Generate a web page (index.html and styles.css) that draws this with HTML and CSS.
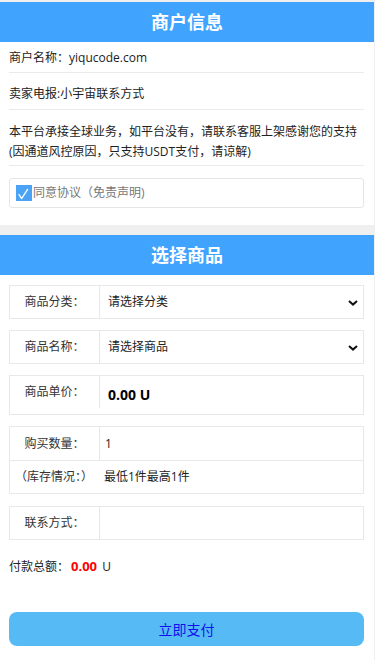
FILE: index.html
```html
<!DOCTYPE html>
<html lang="zh-CN">
<head>
<meta charset="utf-8">
<meta name="viewport" content="width=device-width, initial-scale=1">
<title>商户信息</title>
<link rel="stylesheet" href="styles.css">
</head>
<body>
<div class="page">
  <section class="panel">
    <h2 class="panel-title">商户信息</h2>
    <div class="info">
      <div class="info-row first">商户名称：yiqucode.com</div>
      <div class="info-row">卖家电报:小宇宙联系方式</div>
      <div class="info-row para">本平台承接全球业务，如平台没有，请联系客服上架感谢您的支持<br>(因通道风控原因，只支持USDT支付，请谅解)</div>
      <label class="agree">
        <span class="check"><svg width="16" height="16" viewBox="0 0 16 16"><path d="M3 9.6 L5.6 13.6 L11.6 4.4" fill="none" stroke="#fff" stroke-width="1.3" stroke-linecap="round" stroke-linejoin="round"/></svg></span>
        <span class="agree-text">同意协议（免责声明)</span>
      </label>
    </div>
  </section>

  <div class="band"></div>

  <section class="panel">
    <h2 class="panel-title">选择商品</h2>
    <div class="form">
      <div class="field">
        <div class="label">商品分类：</div>
        <div class="value select">
          <span>请选择分类</span>
          <svg class="chev" width="10" height="6" viewBox="0 0 10 6"><path d="M1 1 L5 4.6 L9 1" fill="none" stroke="#111" stroke-width="2"/></svg>
        </div>
      </div>
      <div class="field">
        <div class="label">商品名称：</div>
        <div class="value select">
          <span>请选择商品</span>
          <svg class="chev" width="10" height="6" viewBox="0 0 10 6"><path d="M1 1 L5 4.6 L9 1" fill="none" stroke="#111" stroke-width="2"/></svg>
        </div>
      </div>
      <div class="field tall">
        <div class="label">商品单价：</div>
        <div class="value price">0.00 U</div>
      </div>
      <div class="group">
        <div class="field inner">
          <div class="label">购买数量：</div>
          <div class="value plain">1</div>
        </div>
        <div class="field inner nodiv">
          <div class="label wide">（库存情况：）</div>
          <div class="value stock">最低1件最高1件</div>
        </div>
      </div>
      <div class="field contact">
        <div class="label">联系方式：</div>
        <div class="value plain"></div>
      </div>
      <div class="total">付款总额：<b class="amount">0.00</b> U</div>
      <button class="pay" type="button">立即支付</button>
    </div>
  </section>
</div>
</body>
</html>
```

FILE: styles.css
```css
html, body {
  margin: 0;
  padding: 0;
}
body {
  background: #efefef;
  font-family: "Open Sans", "Noto Sans CJK SC", sans-serif;
  font-size: 12px;
  color: #333;
}
.page {
  width: 374px;
  margin-top: 2px;
  background: #fff;
  padding-bottom: 14px;
}
.panel-title {
  margin: 0;
  height: 40px;
  line-height: 40px;
  background: #40a4ff;
  color: #fff;
  text-align: center;
  font-size: 18px;
  font-weight: bold;
}
.info {
  padding: 0 10px 17px 9px;
}
.info-row {
  line-height: 20px;
  padding: 11px 0 5px;
  border-bottom: 1px solid #ebebeb;
  color: #222;
}
.info-row.first {
  padding: 6px 0 4px;
}
.info-row.para {
  padding: 12px 0 3px;
}
.agree {
  margin-top: 12px;
  height: 28px;
  border: 1px solid #e6e6e6;
  border-radius: 3px;
  display: flex;
  align-items: center;
  padding-left: 6px;
}
.check {
  width: 16px;
  height: 16px;
  background: #4aa3f4;
  display: block;
  margin-right: 1px;
}
.check svg {
  display: block;
}
.agree-text {
  color: #777;
  line-height: 16px;
}
.band {
  height: 10px;
  background: #efefef;
}
.form {
  padding: 10px 10px 0 9px;
}
.field {
  display: flex;
  border: 1px solid #e8e8e8;
  height: 32px;
  margin-bottom: 11px;
}
.field.tall {
  height: 38px;
  align-items: flex-start;
}
.label {
  width: 89px;
  height: 32px;
  line-height: 32px;
  border-right: 1px solid #e8e8e8;
  text-align: center;
  flex: none;
  color: #333;
}
.value {
  flex: 1;
  line-height: 32px;
  position: relative;
  color: #222;
}
.select {
  padding-left: 8px;
}
.chev {
  position: absolute;
  right: 5px;
  top: 14px;
}
.price {
  padding-left: 8px;
  line-height: 38px;
  font-size: 14px;
  font-weight: bold;
  color: #000;
}
.plain {
  padding-left: 5px;
}
.group {
  border: 1px solid #e8e8e8;
  margin-bottom: 12px;
}
.field.inner {
  border: none;
  margin: 0;
  height: 32px;
}
.field.inner:first-child {
  border-bottom: 1px solid #e8e8e8;
  height: 33px;
}
.field.inner:first-child .label {
  height: 33px;
  line-height: 33px;
}
.field.inner:first-child .value {
  line-height: 33px;
}
.nodiv .label {
  border-right: 1px solid transparent;
  text-align: left;
  padding-left: 5px;
  width: 88px;
}
.stock {
  padding-left: 0;
}
.contact {
  margin-bottom: 16px;
}
.total {
  line-height: 20px;
  color: #222;
}
.amount {
  color: #ff0000;
  font-size: 13px;
  margin-left: 2px;
  margin-right: 2px;
}
.pay {
  display: block;
  width: 100%;
  height: 34px;
  margin-top: 35px;
  border: none;
  border-radius: 8px;
  background: #56bbf5;
  color: #1010ee;
  font-family: "Open Sans", "Noto Sans CJK SC", sans-serif;
  font-size: 14px;
  padding: 0;
}
```
